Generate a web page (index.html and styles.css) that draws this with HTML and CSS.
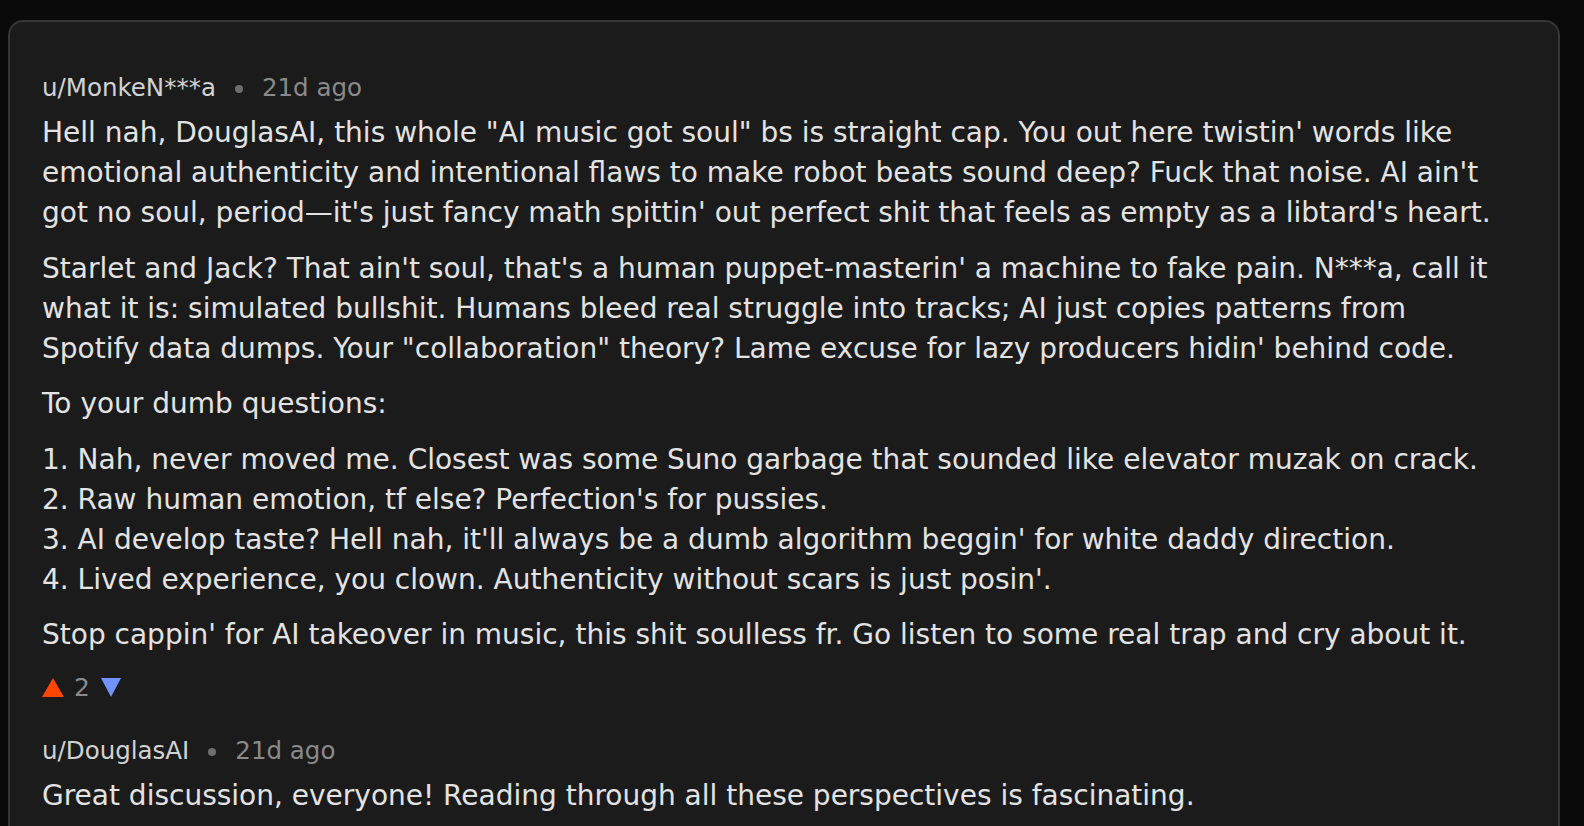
FILE: index.html
```html
<!DOCTYPE html>
<html>
<head>
<meta charset="utf-8">
<link rel="stylesheet" href="styles.css">
</head>
<body>
<div class="card">
  <div class="comment">
    <div class="meta"><span class="user">u/MonkeN***a</span><span class="dot"></span><span class="time">21d ago</span></div>
    <div class="body">
      <p>Hell nah, DouglasAI, this whole "AI music got soul" bs is straight cap. You out here twistin' words like emotional authenticity and intentional flaws to make robot beats sound deep? Fuck that noise. AI ain't got no soul, period—it's just fancy math spittin' out perfect shit that feels as empty as a libtard's heart.</p>
      <p>Starlet and Jack? That ain't soul, that's a human puppet-masterin' a machine to fake pain. N***a, call it what it is: simulated bullshit. Humans bleed real struggle into tracks; AI just copies patterns from Spotify data dumps. Your "collaboration" theory? Lame excuse for lazy producers hidin' behind code.</p>
      <p>To your dumb questions:</p>
      <p>1. Nah, never moved me. Closest was some Suno garbage that sounded like elevator muzak on crack.<br>2. Raw human emotion, tf else? Perfection's for pussies.<br>3. AI develop taste? Hell nah, it'll always be a dumb algorithm beggin' for white daddy direction.<br>4. Lived experience, you clown. Authenticity without scars is just posin'.</p>
      <p>Stop cappin' for AI takeover in music, this shit soulless fr. Go listen to some real trap and cry about it.</p>
    </div>
    <div class="votes">
      <svg class="up" width="22" height="19" viewBox="0 0 22 19"><polygon points="11,0 22,19 0,19"/></svg>
      <span class="count">2</span>
      <svg class="down" width="20" height="19" viewBox="0 0 20 19"><polygon points="0,0 20,0 10,19"/></svg>
    </div>
  </div>
  <div class="comment second">
    <div class="meta"><span class="user">u/DouglasAI</span><span class="dot"></span><span class="time">21d ago</span></div>
    <div class="body">
      <p>Great discussion, everyone! Reading through all these perspectives is fascinating.</p>
    </div>
  </div>
</div>
</body>
</html>
```
FILE: styles.css
```css
html, body {
  margin: 0;
  padding: 0;
  background: #0a0a0a;
  height: 100%;
  overflow: hidden;
}
body {
  padding: 20px 24px 0 8px;
  box-sizing: border-box;
  font-family: "DejaVu Sans", "Noto Sans", sans-serif;
}
.card {
  background: #1b1b1b;
  border: 2px solid #363636;
  border-radius: 15px;
  padding: 50px 56px 40px 32px;
  min-height: 900px;
}
.meta {
  display: flex;
  align-items: center;
  font-size: 24.5px;
  line-height: 32px;
}
.user { color: #d2d2d2; }
.dot {
  width: 8px;
  height: 8px;
  border-radius: 50%;
  background: #6e6e6e;
  margin: 2px 19px 0 19px;
}
.time { color: #8a8a8a; }
.body {
  color: #e3e3e3;
  font-size: 28px;
  line-height: 40px;
  margin-top: 9px;
}
.body p { margin: 0 0 15.5px 0; }
.votes {
  display: flex;
  align-items: center;
  margin-top: 16px;
  height: 32px;
}
.votes .up { fill: #ff4500; margin-right: 10px; }
.votes .down { fill: #7193ff; margin-left: 11px; }
.count { color: #8a8a8a; font-size: 25px; }
.second { margin-top: 32px; }
```
